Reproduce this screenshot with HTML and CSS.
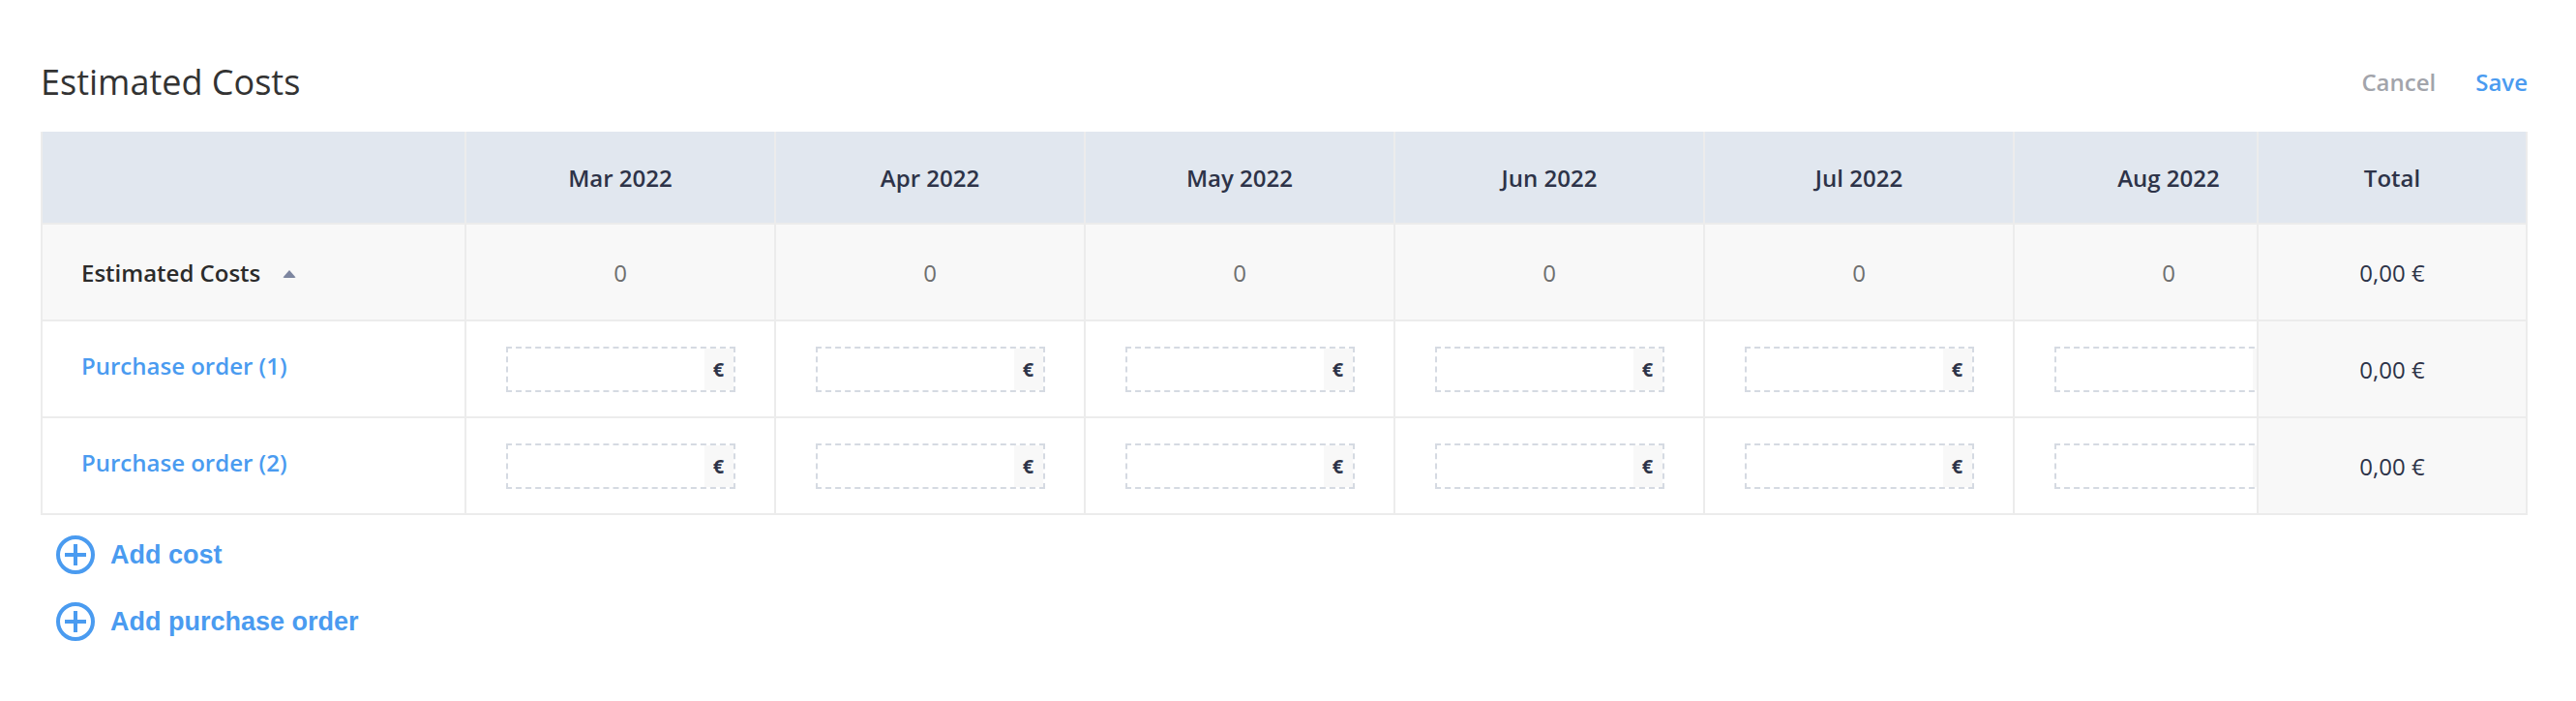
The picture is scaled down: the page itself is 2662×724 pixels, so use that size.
FILE: index.html
```html
<!DOCTYPE html>
<html lang="en">
<head>
    <meta charset="UTF-8">
    <meta name="viewport" content="width=device-width, initial-scale=1.0">
    <title>Estimated Costs</title>
    <link rel="stylesheet" href="styles.css">
</head>
<body>
    <div class="page">
        <!-- Title bar -->
        <div class="toolbar">
            <h1>Estimated Costs</h1>
            <div class="actions">
                <button class="btn btn-cancel">Cancel</button>
                <button class="btn btn-save">Save</button>
            </div>
        </div>

        <!-- Costs table, total column stays pinned on the right -->
        <div class="table-wrap">
            <table class="costs">
                <thead>
                    <tr>
                        <th class="label-col"></th>
                        <th>Mar 2022</th>
                        <th>Apr 2022</th>
                        <th>May 2022</th>
                        <th>Jun 2022</th>
                        <th>Jul 2022</th>
                        <th>Aug 2022</th>
                        <th class="total">Total</th>
                    </tr>
                </thead>
                <tbody>
                    <tr class="summary">
                        <td class="label-col">
                            <span class="summary-label">Estimated Costs</span>
                            <span class="caret"></span>
                        </td>
                        <td class="zero">0</td>
                        <td class="zero">0</td>
                        <td class="zero">0</td>
                        <td class="zero">0</td>
                        <td class="zero">0</td>
                        <td class="zero">0</td>
                        <td class="total">0,00 €</td>
                    </tr>
                    <tr>
                        <td class="label-col"><a href="#" class="order-link">Purchase order (1)</a></td>
                        <td><div class="money"><input type="text"><span class="unit">€</span></div></td>
                        <td><div class="money"><input type="text"><span class="unit">€</span></div></td>
                        <td><div class="money"><input type="text"><span class="unit">€</span></div></td>
                        <td><div class="money"><input type="text"><span class="unit">€</span></div></td>
                        <td><div class="money"><input type="text"><span class="unit">€</span></div></td>
                        <td><div class="money"><input type="text"><span class="unit">€</span></div></td>
                        <td class="total">0,00 €</td>
                    </tr>
                    <tr>
                        <td class="label-col"><a href="#" class="order-link">Purchase order (2)</a></td>
                        <td><div class="money"><input type="text"><span class="unit">€</span></div></td>
                        <td><div class="money"><input type="text"><span class="unit">€</span></div></td>
                        <td><div class="money"><input type="text"><span class="unit">€</span></div></td>
                        <td><div class="money"><input type="text"><span class="unit">€</span></div></td>
                        <td><div class="money"><input type="text"><span class="unit">€</span></div></td>
                        <td><div class="money"><input type="text"><span class="unit">€</span></div></td>
                        <td class="total">0,00 €</td>
                    </tr>
                </tbody>
            </table>
        </div>

        <!-- Add links -->
        <div class="add-links">
            <a href="#" class="add-link">
                <svg class="plus-icon" viewBox="0 0 40 40" width="40" height="40">
                    <circle cx="20" cy="20" r="18" fill="none" stroke="currentColor" stroke-width="4"/>
                    <path d="M20 9 V31 M9 20 H31" stroke="currentColor" stroke-width="4"/>
                </svg>
                Add cost
            </a>
            <a href="#" class="add-link">
                <svg class="plus-icon" viewBox="0 0 40 40" width="40" height="40">
                    <circle cx="20" cy="20" r="18" fill="none" stroke="currentColor" stroke-width="4"/>
                    <path d="M20 9 V31 M9 20 H31" stroke="currentColor" stroke-width="4"/>
                </svg>
                Add purchase order
            </a>
        </div>
    </div>
</body>
</html>
```

FILE: styles.css
```css
body {
    margin: 0;
    padding: 0;
    background-color: #fff;
    font-family: "Open Sans", "Noto Sans", sans-serif;
    color: #333;
}
.page {
    width: 2570px;
    padding-left: 42px;
}

/* Title bar */
.toolbar {
    display: flex;
    align-items: center;
    justify-content: space-between;
    padding-top: 60px;
    margin-bottom: 27px;
}
.toolbar h1 {
    margin: 0;
    font-size: 36px;
    font-weight: 400;
    color: #333;
}
.actions {
    display: flex;
    gap: 41px;
}
.btn {
    border: none;
    background: none;
    padding: 0;
    font-family: inherit;
    font-size: 24px;
    font-weight: 600;
    cursor: pointer;
}
.btn-cancel {
    color: #a2a4ab;
}
.btn-save {
    color: #4a9bf0;
}

/* Table */
.table-wrap {
    overflow: hidden;
    border-left: 2px solid #ececec;
    border-right: 2px solid #ececec;
}
.costs {
    border-collapse: separate;
    border-spacing: 0;
    table-layout: fixed;
    width: 2636px;
}
.costs th,
.costs td {
    box-sizing: border-box;
    width: 320px;
    padding: 0;
    border-right: 2px solid #ececec;
    border-bottom: 2px solid #ececec;
    text-align: center;
    font-size: 24px;
    vertical-align: middle;
}
.costs th {
    height: 96px;
    background-color: #e1e7ef;
    font-weight: 600;
    color: #2d3348;
}
.costs td {
    height: 100px;
    background-color: #fff;
}
.costs .label-col {
    width: 438px;
    text-align: left;
    padding-left: 40px;
}
.costs .total {
    position: sticky;
    right: 0;
    width: 278px;
    border-right: none;
    border-left: 2px solid #ececec;
    color: #2d3348;
}
.costs td.total {
    background-color: #f8f8f8;
}

/* Summary row */
.summary td {
    background-color: #f8f8f8;
}
.summary-label {
    font-weight: 600;
    color: #2b2b2b;
}
.caret {
    display: inline-block;
    width: 0;
    height: 0;
    margin-left: 16px;
    border-left: 7px solid transparent;
    border-right: 7px solid transparent;
    border-bottom: 8px solid #7d86a0;
    border-radius: 2px;
    vertical-align: 4px;
}
.zero {
    color: #6f6f6f;
}

/* Purchase order rows */
.order-link {
    display: inline-block;
    margin-bottom: 8px;
    color: #4a9bf0;
    font-weight: 600;
    text-decoration: none;
}
.money {
    display: inline-flex;
    box-sizing: border-box;
    width: 237px;
    height: 47px;
    border: 2px dashed #d5dae2;
    vertical-align: middle;
}
.money input {
    flex: 1;
    min-width: 0;
    border: none;
    outline: none;
    background: transparent;
}
.money .unit {
    display: flex;
    align-items: center;
    justify-content: center;
    width: 30px;
    background-color: #f8f8f8;
    font-size: 20px;
    font-weight: 700;
    color: #2d3348;
}

/* Add links */
.add-links {
    display: flex;
    flex-direction: column;
    gap: 29px;
    padding-top: 21px;
    padding-left: 16px;
}
.add-link {
    display: flex;
    align-items: center;
    gap: 16px;
    color: #4a9bf0;
    font-family: "Liberation Sans", Arial, sans-serif;
    font-size: 27px;
    font-weight: 700;
    text-decoration: none;
}
.plus-icon {
    flex-shrink: 0;
}
```
